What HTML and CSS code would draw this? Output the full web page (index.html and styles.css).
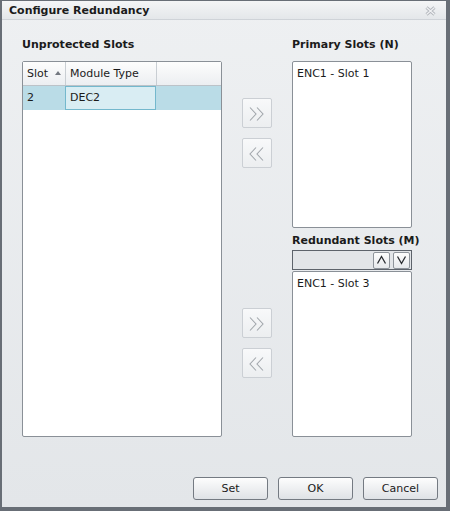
FILE: index.html
```html
<!DOCTYPE html>
<html lang="en">
<head>
    <meta charset="UTF-8">
    <title>Configure Redundancy</title>
    <link rel="stylesheet" href="styles.css">
</head>
<body>
    <div class="dialog">
        <div class="titlebar">
            <span class="title">Configure Redundancy</span>
            <svg class="close" width="11" height="10" viewBox="0 0 11 10">
                <path d="M1.5 1.5 L9.5 8.5 M9.5 1.5 L1.5 8.5" stroke="#b3b7bc" stroke-width="3" fill="none"/>
                <path d="M1.5 1.5 L9.5 8.5 M9.5 1.5 L1.5 8.5" stroke="#f1f2f4" stroke-width="1.2" fill="none"/>
            </svg>
        </div>

        <div class="panes">
            <div class="pane">
                <h2>Unprotected Slots</h2>
                <div class="grid">
                    <div class="grid-head">
                        <div class="col col-slot">Slot <span class="sort"></span></div>
                        <div class="col col-type">Module Type</div>
                        <div class="col col-rest"></div>
                    </div>
                    <div class="grid-row selected">
                        <div class="col col-slot">2</div>
                        <div class="col col-type current">DEC2</div>
                        <div class="col col-rest"></div>
                    </div>
                </div>
            </div>

            <div class="movers">
                <div class="mover-pair">
                    <button class="mover"><svg width="16" height="14" viewBox="0 0 16 14"><path d="M1 0.5 L7 7 L1 13.5 M8 0.5 L14 7 L8 13.5" /></svg></button>
                    <button class="mover"><svg width="16" height="14" viewBox="0 0 16 14"><path d="M7 0.5 L1 7 L7 13.5 M14 0.5 L8 7 L14 13.5" /></svg></button>
                </div>
                <div class="mover-pair lower">
                    <button class="mover"><svg width="16" height="14" viewBox="0 0 16 14"><path d="M1 0.5 L7 7 L1 13.5 M8 0.5 L14 7 L8 13.5" /></svg></button>
                    <button class="mover"><svg width="16" height="14" viewBox="0 0 16 14"><path d="M7 0.5 L1 7 L7 13.5 M14 0.5 L8 7 L14 13.5" /></svg></button>
                </div>
            </div>

            <div class="pane">
                <h2>Primary Slots (N)</h2>
                <ul class="listbox primary">
                    <li>ENC1 - Slot 1</li>
                </ul>
                <h2 class="second">Redundant Slots (M)</h2>
                <div class="order-bar">
                    <button class="order"><svg width="11" height="10" viewBox="0 0 11 10"><path d="M1.5 8.5 L5.5 1.5 L9.5 8.5" /></svg></button>
                    <button class="order"><svg width="11" height="10" viewBox="0 0 11 10"><path d="M1.5 1.5 L5.5 8.5 L9.5 1.5" /></svg></button>
                </div>
                <ul class="listbox redundant">
                    <li>ENC1 - Slot 3</li>
                </ul>
            </div>
        </div>

        <div class="footer">
            <button class="action">Set</button>
            <button class="action">OK</button>
            <button class="action">Cancel</button>
        </div>
    </div>
</body>
</html>
```

FILE: styles.css
```css
* {
    box-sizing: border-box;
    margin: 0;
    padding: 0;
    font-family: "DejaVu Sans", Verdana, sans-serif;
}

body {
    background-color: #e6e9ec;
}

.dialog {
    width: 450px;
    height: 511px;
    display: flex;
    flex-direction: column;
    border-style: solid;
    border-color: #686e76;
    border-width: 1px 4px 4px 2px;
    background: linear-gradient(#eef0f2, #e3e6e9);
    color: #1b1b1b;
}

.titlebar {
    height: 19px;
    display: flex;
    align-items: center;
    justify-content: space-between;
    padding: 1px 10px 0 7px;
    background: linear-gradient(#f4f5f6, #e4e7ea);
    border-bottom: 1px solid #cfd3d8;
}

.title {
    font-size: 11px;
    font-weight: bold;
}

.panes {
    display: grid;
    grid-template-columns: 200px 70px 120px;
    margin-left: 20px;
    padding-top: 17px;
}

h2 {
    font-size: 11px;
    font-weight: bold;
    line-height: 16px;
    height: 16px;
    margin-bottom: 8px;
    white-space: nowrap;
}

h2.second {
    margin-top: 5px;
    margin-bottom: 1px;
}

/* data grid */
.grid {
    height: 376px;
    background-color: #fff;
    border: 1px solid #8a9097;
    border-radius: 2px;
    font-size: 11px;
}

.grid-head, .grid-row {
    display: flex;
    height: 24px;
    line-height: 24px;
}

.grid-head {
    background: linear-gradient(#fdfdfd, #eceef1);
    border-bottom: 1px solid #bcc2c8;
}

.grid-head .col {
    border-right: 1px solid #c9ced3;
}

.col {
    padding-left: 4px;
}

.col-slot {
    width: 43px;
}

.col-type {
    width: 91px;
}

.col-rest {
    flex: 1;
}

.grid-head .col-rest {
    border-right: none;
}

.sort {
    display: inline-block;
    width: 0;
    height: 0;
    margin-left: 3px;
    vertical-align: 2px;
    border-left: 3.5px solid transparent;
    border-right: 3.5px solid transparent;
    border-bottom: 4px solid #737880;
}

.grid-row.selected {
    background-color: #badce7;
}

.grid-row .current {
    background-color: #d9edf3;
    border: 1px solid #74b8cd;
    line-height: 22px;
    margin-left: -1px;
    width: 91px;
}

/* move buttons */
.movers {
    padding-top: 61px;
    display: flex;
    flex-direction: column;
    align-items: center;
}

.mover-pair {
    display: flex;
    flex-direction: column;
    gap: 10px;
}

.mover-pair.lower {
    margin-top: 140px;
}

.mover {
    width: 30px;
    height: 30px;
    display: flex;
    align-items: center;
    justify-content: center;
    padding-top: 2px;
    border: 1px solid #cbcfd4;
    border-radius: 2px;
    background: linear-gradient(#f8f9fa, #eceef0);
}

.mover path {
    stroke: #a1a6ab;
    stroke-width: 1.1;
    fill: none;
}

/* list boxes */
.listbox {
    list-style: none;
    background-color: #fff;
    border: 1px solid #8a9097;
    border-radius: 2px;
    font-size: 11px;
    line-height: 14px;
    padding: 5px 4px;
}

.listbox.primary {
    height: 167px;
}

.listbox.redundant {
    height: 166px;
    margin-top: 1px;
}

.order-bar {
    height: 20px;
    display: flex;
    justify-content: flex-end;
    align-items: center;
    gap: 3px;
    padding-right: 1px;
    background-color: #e2e5e8;
    border: 1px solid #5d636b;
}

.order {
    width: 17px;
    height: 17px;
    display: flex;
    align-items: center;
    justify-content: center;
    border: 1px solid #8e949b;
    border-radius: 2px;
    background: linear-gradient(#fdfdfd, #e6e9ec);
}

.order path {
    stroke: #2a2d31;
    stroke-width: 1.3;
    fill: none;
}

/* footer */
.footer {
    margin-top: auto;
    display: flex;
    justify-content: flex-end;
    gap: 10px;
    padding: 0 8px 7px 0;
}

.action {
    width: 75px;
    height: 23px;
    font-size: 11px;
    color: #1b1b1b;
    border: 1px solid #747a82;
    border-radius: 3px;
    background: linear-gradient(#fdfdfd, #dfe2e6);
}
```
